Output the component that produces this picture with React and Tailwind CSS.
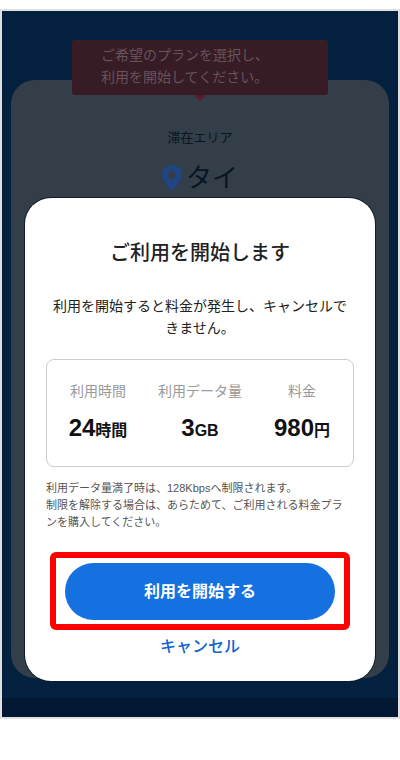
// src/App.jsx

import React from 'react';

const planItems = [
  { label: '利用時間', value: '24', unit: '時間' },
  { label: '利用データ量', value: '3', unit: 'GB' },
  { label: '料金', value: '980', unit: '円' }
];

const PinIcon = () => (
  <svg className="w-5 h-[26px]" viewBox="0 0 20 26" aria-hidden="true">
    <path
      fill="#1f4683"
      d="M10 0C4.4 0 0 4.3 0 9.8 0 13 1.600 15.500 3.500 18.200L10 26l6.500-7.800C18.400 15.500 20 13 20 9.800 20 4.300 15.600 0 10 0z"
    />
    <circle cx="10" cy="10" r="4.2" fill="#343e48" />
  </svg>
);

const PlanScreen = () => (
  <div className="col-start-1 row-start-1 flex flex-col bg-[#04203f] pt-[29px]">
    {/* Guide balloon */}
    <div className="relative z-10 mx-[70px] rounded-[3px] bg-[#371b25] pl-[29px] pt-1 pb-[7px]">
      <p className="text-sm leading-[22px] text-[#68535c]">
        ご希望のプランを選択し、
        <br />
        利用を開始してください。
      </p>
      <svg className="absolute top-full left-1/2 -translate-x-1/2 w-3 h-1.5" viewBox="0 0 12 6" aria-hidden="true">
        <path fill="#5a1a2b" d="M0 0h12L6 6z" />
      </svg>
    </div>

    {/* Area card */}
    <div className="-mt-[15px] mx-[9px] mb-5 grow rounded-[24px] bg-[#343e48] pt-12 text-center text-[#081523]">
      <p className="text-[13px] leading-5">滞在エリア</p>
      <div className="mt-3 flex items-center justify-center gap-1">
        <PinIcon />
        <span className="text-[26px] leading-9">タイ</span>
      </div>
    </div>

    <div className="h-[19px] bg-[#021832]" />
  </div>
);

const ConfirmDialog = () => (
  <div
    role="dialog"
    aria-labelledby="dialog-title"
    className="z-20 col-start-1 row-start-1 mt-[187px] mb-9 mx-[23px] rounded-[26px] bg-white px-[21px] pt-10 pb-[22px] ring-1 ring-[#111c28]"
  >
    <h1 id="dialog-title" className="text-center text-xl leading-[30px] font-medium text-[#222]">
      ご利用を開始します
    </h1>
    <p className="mt-[27px] px-1 text-center text-sm leading-[22px] text-[#222]">
      利用を開始すると料金が発生し、キャンセルできません。
    </p>

    {/* Plan summary */}
    <div className="mt-5 rounded-lg border border-[#ccc] pt-5 pb-[19px]">
      <table className="w-full table-fixed text-center">
        <thead>
          <tr>
            {planItems.map((item) => (
              <th key={item.label} scope="col" className="p-0 text-sm leading-[22px] font-normal text-[#999]">
                {item.label}
              </th>
            ))}
          </tr>
        </thead>
        <tbody>
          <tr>
            {planItems.map((item) => (
              <td key={item.label} className="px-0 pt-2.5 pb-0 text-2xl leading-8 font-bold text-[#111]">
                {item.value}
                <span className="text-base leading-8">{item.unit}</span>
              </td>
            ))}
          </tr>
        </tbody>
      </table>
    </div>

    <p className="mt-[13px] pr-1 text-[11px] leading-[17px] text-[#555]">
      利用データ量満了時は、128Kbpsへ制限されます。
      <br />
      制限を解除する場合は、あらためて、ご利用される料金プランを購入してください。
    </p>

    {/* Actions */}
    <div className="mt-[21px] mx-1 rounded-md border-6 border-[#ff0000] px-[9px] pt-[5px] pb-1">
      <button type="button" className="block w-full h-[57px] rounded-full bg-[#1671e0] text-base font-bold text-white">
        利用を開始する
      </button>
    </div>
    <button type="button" className="mt-[5px] block mx-auto text-base leading-6 font-medium text-[#0f62cf]">
      キャンセル
    </button>
  </div>
);

const App = () => {
  return (
    <div className="bg-white pt-[9px] pb-10 font-['Liberation_Sans','Noto_Sans_CJK_JP',sans-serif]" lang="ja">
      <main className="grid grid-cols-1 border-2 border-[#e0e0e0]">
        <PlanScreen />
        <ConfirmDialog />
      </main>
    </div>
  );
};

export default App;
